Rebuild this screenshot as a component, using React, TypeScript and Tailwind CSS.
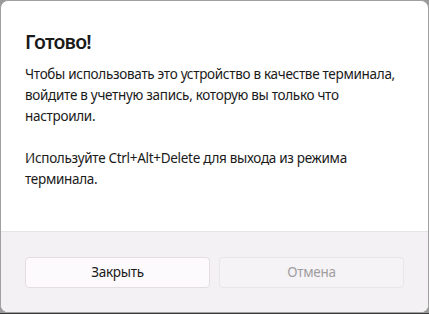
import React from "react";

export default function App() {
  return (
    <div
      className="w-[429px] h-[314px] bg-[#3a3a3a] overflow-hidden"
      style={{ fontFamily: '"Noto Sans", "Open Sans", sans-serif' }}
    >
      <div className="w-[429px] h-[313px] bg-[#9a9a9a]">
        <div className="w-full h-full flex flex-col rounded-lg border border-[#a0a0a0] bg-white overflow-hidden">
          <div className="flex-1 px-6 pt-[27px]">
            <h1 className="text-[19.5px] leading-[28px] font-semibold text-[#1a1a1a] tracking-[-0.8px]">
              Готово!
            </h1>
            <div className="mt-[8px] text-[13.5px] leading-[21px] text-[#1a1a1a] tracking-[-0.3px] whitespace-nowrap">
              <p>
                Чтобы использовать это устройство в качестве терминала,
                <br />
                войдите в учетную запись, которую вы только что
                <br />
                настроили.
              </p>
              <p className="mt-[21px]">
                Используйте Ctrl+Alt+Delete для выхода из режима
                <br />
                терминала.
              </p>
            </div>
          </div>
          <div className="h-[81px] shrink-0 border-t border-[#e6e3e6] bg-[#f4f1f4] px-6 pt-[25px] flex gap-[9px]">
            <button className="flex-1 h-[31px] rounded-[4px] border border-[#e2dee2] bg-[#fdfafd] text-[13.5px] tracking-[-0.3px] text-[#1a1a1a]">
              Закрыть
            </button>
            <button className="flex-1 h-[31px] rounded-[4px] border border-[#e9e6e9] bg-[#f5f3f5] text-[13.5px] tracking-[-0.3px] text-[#a19ea1]">
              Отмена
            </button>
          </div>
        </div>
      </div>
    </div>
  );
}
